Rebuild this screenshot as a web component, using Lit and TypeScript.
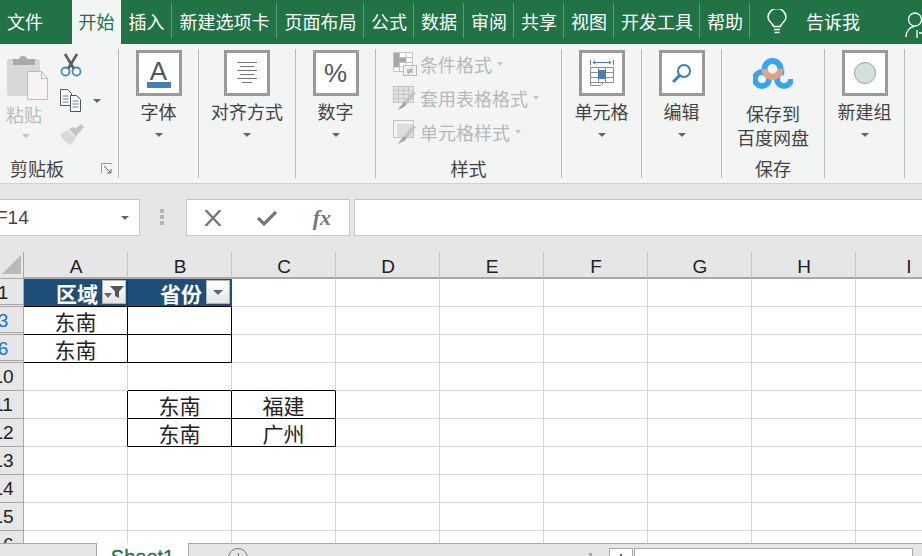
import { LitElement, html, css, svg } from "lit";
import { customElement } from "lit/decorators.js";
import { classMap } from "lit/directives/class-map.js";

const tabs: [string, number][] = [
  ["插入", 51], ["新建选项卡", 105], ["页面布局", 87], ["公式", 50], ["数据", 50],
  ["审阅", 50], ["共享", 50], ["视图", 50], ["开发工具", 86], ["帮助", 50],
];
const cols = ["A", "B", "C", "D", "E", "F", "G", "H", "I"];
type C = { t?: string; cls?: string };
const rows: { n: string; hid?: boolean; link?: boolean; cells: Record<string, C> }[] = [
  { n: "1", hid: true, cells: {
      A: { t: "区域", cls: "head bb" }, B: { t: "省份", cls: "head bb br" } } },
  { n: "3", hid: true, link: true, cells: { A: { t: "东南", cls: "bb br" }, B: { cls: "bb br" } } },
  { n: "6", hid: true, link: true, cells: { A: { t: "东南", cls: "bb br" }, B: { cls: "bb br" } } },
  { n: "10", cells: { B: { cls: "bb" }, C: { cls: "bb" } } },
  { n: "11", cells: { A: { cls: "br" }, B: { t: "东南", cls: "bb br" }, C: { t: "福建", cls: "bb br" } } },
  { n: "12", cells: { A: { cls: "br" }, B: { t: "东南", cls: "bb br" }, C: { t: "广州", cls: "bb br" } } },
  { n: "13", cells: {} }, { n: "14", cells: {} }, { n: "15", cells: {} }, { n: "16", cells: {} },
];

const arrow = (cls = "") => html`<span class="arrow ${cls}"></span>`;

const icons = {
  paste: svg`<svg width="42" height="46" viewBox="0 0 42 46"><rect x="0" y="5" width="33" height="37" rx="3" fill="#d9d7d9"/><path d="M6 11V5h6c0-4 8-4 8 0h8v6z" fill="#a9a9a9"/><path d="M20.500 17.500h14l6 7v21h-20z" fill="#f6f2f6" stroke="#bdbdbd"/><path d="M34.500 17.500v7h6" fill="none" stroke="#bdbdbd"/></svg>`,
  scissors: svg`<svg width="22" height="24" viewBox="0 0 22 24"><path d="M5 1l9 15M17 1L8 16" stroke="#5c5c5c" stroke-width="2.600" fill="none"/><circle cx="5.500" cy="18.500" r="4" fill="#fff" stroke="#4a86b8" stroke-width="1.800"/><circle cx="16.500" cy="18.500" r="4" fill="#fff" stroke="#4a86b8" stroke-width="1.800"/></svg>`,
  copy: svg`<svg width="22" height="23" viewBox="0 0 22 23"><path d="M.5.500h7l4 4v12H.5z" fill="#fff" stroke="#555"/><path d="M2.500 7h6M2.500 10h6M2.500 13h6" stroke="#4a86b8"/><path d="M10.500 6.500h6l4 4v12h-10z" fill="#fff" stroke="#555"/><path d="M12.500 12h6M12.500 15h6M12.500 18h6" stroke="#4a86b8"/></svg>`,
  brush: svg`<svg width="24" height="22" viewBox="0 0 24 22"><path d="M0 10l8-4 8 8-5 7C7 20 2 15 0 10z" fill="#d9d9d9"/><path d="M9 5l5-2 5 5-3 5z" fill="#c4c4c4"/><path d="M15 5l6-5 3 3-5 6z" fill="#c4c4c4"/></svg>`,
  launcher: svg`<svg width="12" height="11" viewBox="0 0 12 11"><path d="M.5 10V.500H11" fill="none" stroke="#9a9a9a"/><path d="M3 3l7 7M10 6v4H6" fill="none" stroke="#666"/></svg>`,
  font: html`<span class="glyph-a">A</span><span class="a-bar"></span>`,
  align: svg`<svg width="22" height="22" viewBox="0 0 22 22"><path d="M1 .500h20M4 4.500h14M1 8.500h20M4 12.500h14M1 16.500h20M6 20.500h10" stroke="#777"/></svg>`,
  cell: svg`<svg width="24" height="26" viewBox="0 0 24 26"><path d="M.5 0v5M23.500 0v5M3 2.500h18M3 2.500l2-1.500M3 2.500L5 4M21 2.500L19 1M21 2.500L19 4" stroke="#3f7db5" fill="none"/><path d="M.5 7.500h23v15H.5z M.5 12.500h23M.5 17.500h23M8.500 7.500v15M15.500 7.500v15" stroke="#8c8c8c" fill="#fff"/><rect x="8" y="10" width="8" height="9" fill="#4a7fb5"/><path d="M.5 22.500v3h10l3-3" fill="none" stroke="#8c8c8c"/></svg>`,
  search: svg`<svg width="20" height="20" viewBox="0 0 20 20"><circle cx="12" cy="8" r="6" fill="#fff" stroke="#3f7db5" stroke-width="2"/><path d="M7.500 12.500L2 18" stroke="#3f7db5" stroke-width="3" stroke-linecap="round"/></svg>`,
  newgroup: html`<span class="dot"></span>`,
  baidu: svg`<svg width="40" height="32" viewBox="0 0 40 32"><circle cx="9" cy="21" r="7" fill="none" stroke="#37a6ee" stroke-width="6"/><circle cx="31" cy="21" r="7" fill="none" stroke="#37a6ee" stroke-width="6" stroke-dasharray="33 11"/><circle cx="19.500" cy="11" r="8" fill="#f3f4f4" stroke="#37a6ee" stroke-width="6"/><path d="M11.500 11a8 8 0 0 0 16 0" fill="none" stroke="#e6a085" stroke-width="6"/></svg>`,
  cond: svg`<svg width="24" height="24" viewBox="0 0 24 24"><rect x=".5" y=".5" width="19" height="19" fill="#fff" stroke="#c4c0c4"/><path d="M.5 5.500h19M.5 10.500h19M.5 15h19M6.500 0v20M13 0v20" stroke="#c4c0c4"/><rect x="1" y="1" width="5" height="14" fill="#a8a8a8"/><rect x="6" y="6" width="7" height="4" fill="#a8a8a8"/><rect x="10.500" y="13.500" width="13" height="10" fill="#f3f0f3" stroke="#b8b8b8"/><path d="M14 18h6M14 20h6M19 16l-4 6" stroke="#999"/></svg>`,
  table: svg`<svg width="24" height="24" viewBox="0 0 24 24"><rect x=".5" y=".5" width="20" height="16" fill="#e4e1e4" stroke="#c4c0c4"/><path d="M.5 4.500h20M.5 8.500h20M.5 12.500h20M5.500 0v17M10.500 0v17M15.500 0v17" stroke="#c9c6c9"/><path d="M23 7l-9 11-3-2 9-11z" fill="#c4c4c4"/><path d="M11 16l3 2-3 3-6 3c1-3 4-5 6-8z" fill="#a5a5a5"/></svg>`,
  style: svg`<svg width="24" height="24" viewBox="0 0 24 24"><rect x=".5" y=".5" width="20" height="17" fill="#f6f3f6" stroke="#c4c0c4"/><rect x="4" y="4" width="16" height="13" fill="#dedcde"/><path d="M23 7l-9 11-3-2 9-11z" fill="#c4c4c4"/><path d="M11 16l3 2-3 3-6 3c1-3 4-5 6-8z" fill="#a5a5a5"/></svg>`,
  bulb: svg`<svg width="20" height="25" viewBox="0 0 20 25"><path d="M6.500 17.500c0-3-5.500-5-5.500-9a9 9 0 0 1 18 0c0 4-5.500 6-5.500 9z" fill="none" stroke="#fff" stroke-width="1.500"/><path d="M7 20.500h6M7.500 23.500h5" stroke="#fff" stroke-width="1.600"/></svg>`,
  person: svg`<svg width="22" height="26" viewBox="0 0 22 26"><circle cx="10" cy="7.500" r="6.500" fill="none" stroke="#fff" stroke-width="1.300"/><path d="M1 25c0-6 4-10 8-10.500M12 18v8M14 21h8" fill="none" stroke="#fff" stroke-width="1.300"/></svg>`,
  x: svg`<svg width="18" height="16" viewBox="0 0 18 16"><path d="M1.500 0l15 16M16.500 0l-15 16" stroke="#777" stroke-width="2.400"/></svg>`,
  check: svg`<svg width="20" height="16" viewBox="0 0 20 16"><path d="M1 8l6 6L19 2" fill="none" stroke="#777" stroke-width="3.200"/></svg>`,
  funnel: svg`<svg width="20" height="13" viewBox="0 0 20 13"><path d="M6 0h14l-5 5.500V12l-4-2V5.500z" fill="#555"/><path d="M0 7h8L4 12z" fill="#666"/></svg>`,
};

@customElement("app-root")
export class AppRoot extends LitElement {
  static styles = css`
    :host { display: block; width: 922px; height: 556px; overflow: hidden; position: relative;
      font-family: "Noto Sans CJK SC", "Liberation Sans", sans-serif; color: #444; background: #fff; }
    .page { display: flex; flex-direction: column; height: 556px; }
    .tabs { display: flex; height: 44px; flex: none; background: #217346; color: #fff; font-size: 18px; align-items: stretch; }
    .tab { display: flex; align-items: center; justify-content: center; padding-bottom: 2px; white-space: nowrap; position: relative; box-sizing: border-box; flex: none; }
    .file { width: 72px; justify-content: flex-start; padding-left: 7px; }
    .home { width: 49px; background: #f3f4f4; color: #217346; }
    .sep::after { content: ""; position: absolute; right: 0; top: 3px; bottom: 6px; width: 1px; background: #5d9a7a; }
    .help-icon { margin-left: 17px; padding-top: 9px; flex: none; }
    .tell { margin-left: 19px; display: flex; align-items: center; padding-bottom: 2px; white-space: nowrap; flex: none; }
    .me { margin-left: 45px; padding-top: 12px; flex: none; }
    .ribbon { display: flex; height: 140px; flex: none; box-sizing: border-box; background: #f3f4f4; padding-top: 5px; border-bottom: 1px solid #d2d2d2; font-size: 18px; }
    .group { height: 129px; display: flex; flex-direction: column; align-items: center; border-right: 1px solid #b9b9b9; box-sizing: content-box; flex: none; }
    .g-label { margin-top: auto; line-height: 18px; color: #444; position: relative; width: 100%; text-align: center; transform: translateY(-1px); }
    .w118 { width: 118px; } .w79 { width: 79px; } .w96 { width: 96px; } .w185 { width: 185px; } .w102 { width: 102px; }
    .bigbox { width: 46px; height: 46px; box-sizing: border-box; border: 3px solid #9a9a9a; background: #fff; margin-top: 1px; display: flex; flex-direction: column; align-items: center; justify-content: center; flex: none; }
    .lbl { margin-top: 3px; line-height: 24px; white-space: nowrap; }
    .arrow { display: block; width: 0; height: 0; border-left: 4px solid transparent; border-right: 4px solid transparent; border-top: 4px solid #666; flex: none; }
    .big-arrow { margin-top: 10px; }
    .off { border-top-color: #c4c4c4; }
    .glyph-a { font: 26px/24px "Liberation Sans", sans-serif; color: #555; }
    .a-bar { width: 24px; height: 6px; background: #4a7fb5; margin-top: -1px; }
    .pct { font: 26px/28px "Liberation Sans", sans-serif; color: #555; }
    .dot { width: 20px; height: 20px; border-radius: 50%; background: #d2e0dc; border: 1px solid #8eaaa4; }
    .clip { display: flex; width: 100%; flex: 1; }
    .clip-left { display: flex; flex-direction: column; align-items: flex-start; width: 48px; margin-left: 7px; flex: none; }
    .clip-left svg { margin-top: 5px; }
    .paste-l { color: #bcbcbc; line-height: 22px; margin-top: 3px; margin-left: -1px; }
    .clip-left .arrow { margin-top: 9px; margin-left: 15px; }
    .clip-right { display: flex; flex-direction: column; margin-left: 5px; gap: 12px; padding-top: 4px; }
    .copy-row { display: flex; align-items: center; gap: 11px; }
    .clip-foot { display: flex; align-items: center; width: 100%; height: 18px; margin-top: auto; transform: translateY(-1px); }
    .clip-foot span { margin-left: 10px; line-height: 18px; }
    .clip-foot svg { margin-left: 37px; }
    .styles { align-items: flex-start; padding-left: 17px; width: 168px; }
    .st-row { display: flex; align-items: center; height: 34px; color: #b8b8b8; white-space: nowrap; }
    .st-row svg { margin-right: 3px; }
    .st-row .arrow { margin-left: 5px; border-left-width: 3.500px; border-right-width: 3.500px; }
    .st-list { margin-top: -2px; }
    .styles .g-label { margin-left: -17px; width: 185px; }
    .save-i { margin-top: 9px; height: 33px; }
    .save-l { text-align: center; line-height: 23.500px; margin-top: 11px; }
    .fbar { height: 68px; flex: none; background: #e6e6e6; display: flex; align-items: flex-start; padding-top: 15px; box-sizing: border-box; }
    .fbox { height: 37px; box-sizing: border-box; background: #fff; border: 1px solid #c6c6c6; display: flex; align-items: center; flex: none; }
    .name { width: 141px; margin-left: -1px; font: 19px "Liberation Sans", sans-serif; color: #444; justify-content: space-between; padding-right: 10px; text-indent: -4px; }
    .dots { width: 4px; margin: 10px 22px 0 20px; display: flex; flex-direction: column; gap: 2px; flex: none; }
    .dots i { height: 4px; background: #b5b5b5; display: block; }
    .fx-box { width: 164px; justify-content: space-between; padding: 0 18px 0 17px; }
    .fx { font: italic bold 22px "Liberation Serif", serif; color: #777; }
    .input { flex: 1; margin-left: 4px; margin-right: -2px; }
    .gridwrap { flex: 1; overflow: hidden; min-height: 0; }
    .grid { display: grid; grid-template-columns: 24px repeat(8, 104px) 106px; grid-template-rows: 27px repeat(10, 28px); }
    .corner { background: #e6e6e6; border-right: 1px solid #a8a8a8; border-bottom: 1px solid #a8a8a8; box-sizing: border-box; display: flex; justify-content: center; padding-top: 3px; }
    .ch { background: #e6e6e6; border-right: 1px solid #c4c4c4; border-bottom: 2px solid #a8a8a8; box-sizing: border-box; text-align: center; font: 19px/29px "Liberation Sans", sans-serif; color: #222; padding-left: 1px; }
    .rh { background: #e6e6e6; border-right: 1px solid #a8a8a8; border-bottom: 1px solid #a8a8a8; box-sizing: border-box; overflow: hidden; font: 19px/28px "Liberation Sans", sans-serif; color: #222; }
    .rh span { display: block; width: 42px; margin-left: -18px; text-align: center; }
    .rh.hid { border-bottom: 3px double #a8a8a8; }
    .rh.link { color: #1a6fd0; }
    .cell { border-right: 1px solid #d6d6d6; border-bottom: 1px solid #d6d6d6; box-sizing: border-box; text-align: center; font-size: 21px; line-height: 28px; color: #222; display: flex; justify-content: center; align-items: center; position: relative; white-space: nowrap; }
    .cell.br { border-right-color: #000; }
    .cell.bb { border-bottom-color: #000; }
    .cell.head { background: #1f4e78; color: #fff; font-weight: 700; border-right-color: #16395a; justify-content: flex-end; padding-right: 29px; }
    .cell.head.br { border-right-color: #1f4e78; }
    .filt { position: absolute; right: 1px; top: 1px; width: 24px; height: 24px; box-sizing: border-box; border: 1px solid #b4b4b4; background: linear-gradient(#fff, #e4e4e4); display: flex; align-items: center; justify-content: center; }
    .tri { width: 0; height: 0; border-left: 5px solid transparent; border-right: 5px solid transparent; border-top: 5px solid #666; }
    .bottom { height: 13px; flex: none; display: flex; background: #e6e6e6; overflow: hidden; position: absolute; left: 0; right: 0; bottom: 0; }
    .left-nav { width: 96px; border-top: 1px solid #a8a8a8; border-right: 1px solid #a8a8a8; box-sizing: content-box; flex: none; }
    .sheet { width: 91px; flex: none; background: #fff; text-align: center; color: #217346; font: 400 20px/26px "Liberation Sans", sans-serif; -webkit-text-stroke: .3px #217346; padding-top: 1px; box-sizing: border-box; }
    .right { flex: 1; border-top: 1px solid #a8a8a8; border-left: 1px solid #a8a8a8; display: flex; align-items: flex-start; position: relative; }
    .plus { margin-left: 39px; width: 20px; height: 20px; border-radius: 50%; border: 1px solid #777; box-sizing: border-box; margin-top: 4px; flex: none; display: flex; justify-content: center; }
    .plus::after { content: ""; width: 1px; height: 8px; margin-top: 4px; background: #777; }
    .sdot { margin-left: 341px; margin-top: 9px; width: 3px; height: 3px; background: #aaa; flex: none; }
    .sb-l { margin-left: 17px; margin-top: 4px; width: 24px; height: 20px; background: #fff; border: 1px solid #aaa; box-sizing: border-box; flex: none; display: flex; justify-content: center; }
    .sb-l::after { content: ""; width: 2px; height: 6px; margin-top: 5px; background: #666; }
    .sb { margin-top: 4px; margin-left: 1px; width: 279px; height: 20px; background: #fff; border: 1px solid #aaa; box-sizing: border-box; flex: none; }
  `;

  private big(icon: unknown, label: string, w: string) {
    return html`<div class="group ${w}">
      <div class="bigbox">${icon}</div>
      <div class="lbl">${label}</div>
      ${arrow("big-arrow")}
    </div>`;
  }

  render() {
    return html`<div class="page">
      <div class="tabs">
        <div class="tab file">文件</div>
        <div class="tab home">开始</div>
        ${tabs.map(([t, w]) => html`<div class="tab sep" style="width:${w}px">${t}</div>`)}
        <div class="help-icon">${icons.bulb}</div>
        <div class="tell">告诉我</div>
        <div class="me">${icons.person}</div>
      </div>

      <div class="ribbon">
        <div class="group w118">
          <div class="clip">
            <div class="clip-left">
              ${icons.paste}
              <div class="paste-l">粘贴</div>
              ${arrow("off")}
            </div>
            <div class="clip-right">
              ${icons.scissors}
              <div class="copy-row">${icons.copy}${arrow()}</div>
              ${icons.brush}
            </div>
          </div>
          <div class="clip-foot"><span>剪贴板</span>${icons.launcher}</div>
        </div>
        ${this.big(icons.font, "字体", "w79")}
        ${this.big(icons.align, "对齐方式", "w96")}
        ${this.big(html`<span class="pct">%</span>`, "数字", "w79")}
        <div class="group styles">
          <div class="st-list">
            <div class="st-row">${icons.cond}条件格式${arrow("off")}</div>
            <div class="st-row">${icons.table}套用表格格式${arrow("off")}</div>
            <div class="st-row">${icons.style}单元格样式${arrow("off")}</div>
          </div>
          <div class="g-label">样式</div>
        </div>
        ${this.big(icons.cell, "单元格", "w79")}
        ${this.big(icons.search, "编辑", "w79")}
        <div class="group w102">
          <div class="save-i">${icons.baidu}</div>
          <div class="save-l">保存到<br />百度网盘</div>
          <div class="g-label">保存</div>
        </div>
        ${this.big(icons.newgroup, "新建组", "w79")}
      </div>

      <div class="fbar">
        <div class="fbox name"><span>F14</span>${arrow("")}</div>
        <div class="dots"><i></i><i></i><i></i></div>
        <div class="fbox fx-box">${icons.x}${icons.check}<span class="fx">fx</span></div>
        <div class="fbox input"></div>
      </div>

      <div class="gridwrap">
        <div class="grid">
          <div class="corner"><svg width="20" height="20" viewBox="0 0 20 20"><path d="M19 0v19H0z" fill="#b9b9b9"/></svg></div>
          ${cols.map((c) => html`<div class="ch">${c}</div>`)}
          ${rows.map((r) => html`
            <div class=${classMap({ rh: true, hid: !!r.hid, link: !!r.link })}><span>${r.n}</span></div>
            ${cols.map((c) => {
              const d = r.cells[c] || {};
              const isHead = (d.cls || "").includes("head");
              return html`<div class="cell ${d.cls || ""}">${d.t || ""}${isHead
                ? html`<span class="filt">${c === "A" ? icons.funnel : html`<span class="tri"></span>`}</span>`
                : ""}</div>`;
            })}
          `)}
        </div>
      </div>

      <div class="bottom">
        <div class="left-nav"></div>
        <div class="sheet">Sheet1</div>
        <div class="right">
          <div class="plus"></div>
          <div class="sdot"></div>
          <div class="sb-l"></div>
          <div class="sb"></div>
        </div>
      </div>
    </div>`;
  }
}
